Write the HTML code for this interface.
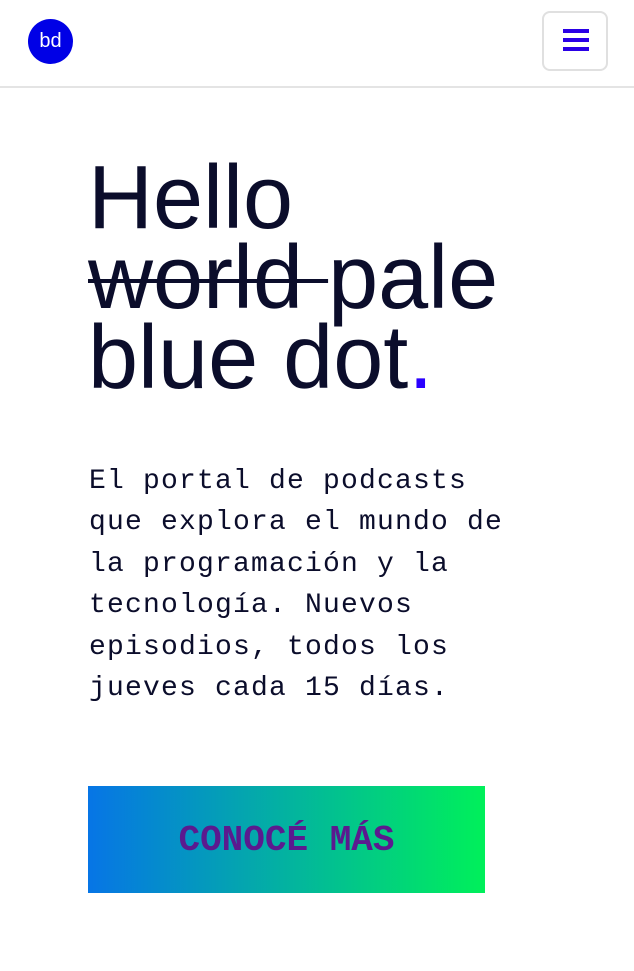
<!DOCTYPE html>
<html><head><meta charset="utf-8"><style>
*{margin:0;padding:0;box-sizing:border-box}
body{width:634px;height:971px;background:#fff;font-family:"Liberation Sans",sans-serif;overflow:hidden;position:relative;color:#0b0d2b}
.hdr{position:absolute;left:0;top:0;width:634px;height:88px;border-bottom:2px solid #e4e4e4}
.logo{position:absolute;left:28px;top:19px;width:45px;height:45px;border-radius:50%;background:#0000e6;color:#fff;font-size:20px;line-height:45px;text-align:center}
.menu{position:absolute;left:542px;top:11px;width:66px;height:60px;border:2px solid #e0e0e0;border-radius:8px}
.menu i{position:absolute;left:19px;width:26px;height:4px;background:#2a00e6}
h1{position:absolute;left:88px;top:158px;font-weight:normal;font-size:90px;line-height:80px;letter-spacing:0;color:#0b0d2b}
h1 s{text-decoration-thickness:4px}
.dot{color:#2a00ff}
p{position:absolute;left:89px;top:461px;font-family:"Liberation Mono",monospace;font-size:28px;line-height:41.4px;letter-spacing:1.2px;color:#0b0d2b}
.btn{position:absolute;left:88px;top:786px;width:397px;height:107px;background:linear-gradient(90deg,#0675e6,#00f05a);color:#5b1a8f;font-family:"Liberation Mono",monospace;font-weight:bold;font-size:36px;line-height:109px;text-align:center}
</style></head><body>
<div class="hdr"><div class="logo">bd</div><div class="menu"><i style="top:16px"></i><i style="top:25px"></i><i style="top:34px"></i></div></div>
<h1>Hello<br><s>world </s>pale<br>blue dot<span class="dot">.</span></h1>
<p>El portal de podcasts<br>que explora el mundo de<br>la programación y la<br>tecnología. Nuevos<br>episodios, todos los<br>jueves cada 15 días.</p>
<div class="btn">CONOCÉ MÁS</div>
</body></html>
